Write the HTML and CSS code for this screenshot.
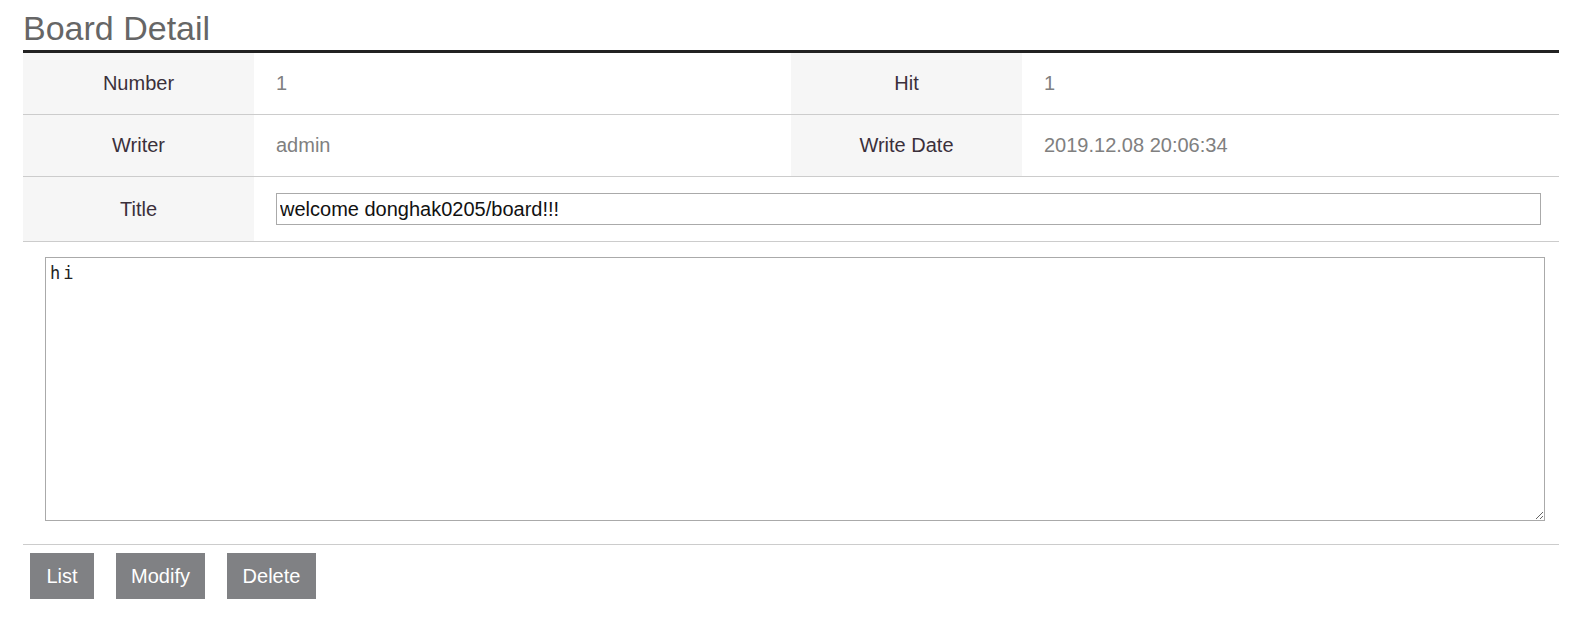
FILE: index.html
```html
<!DOCTYPE html>
<html>
<head>
<meta charset="utf-8">
<link rel="stylesheet" href="styles.css">
</head>
<body>
<div class="board">
  <h2 class="board-title">Board Detail</h2>
  <table class="detail">
    <colgroup>
      <col class="col-label">
      <col class="col-value">
      <col class="col-label">
      <col class="col-value">
    </colgroup>
    <tr>
      <th class="label">Number</th>
      <td class="value">1</td>
      <th class="label">Hit</th>
      <td class="value">1</td>
    </tr>
    <tr>
      <th class="label">Writer</th>
      <td class="value">admin</td>
      <th class="label">Write Date</th>
      <td class="value">2019.12.08 20:06:34</td>
    </tr>
    <tr class="title-row">
      <th class="label">Title</th>
      <td class="value input-cell" colspan="3"><input class="title-input" type="text" value="welcome donghak0205/board!!!"></td>
    </tr>
  </table>
  <div class="content-area">
    <textarea class="content">hi</textarea>
  </div>
  <div class="actions">
    <button class="btn btn-short">List</button>
    <button class="btn">Modify</button>
    <button class="btn">Delete</button>
  </div>
</div>
</body>
</html>
```
FILE: styles.css
```css
html, body {
  margin: 0;
  padding: 0;
  background: #fff;
}
body {
  font-family: "Liberation Sans", Arial, sans-serif;
}
.board {
  width: 1536px;
  margin-left: 23px;
}
.board-title {
  margin: 0;
  padding-top: 8px;
  height: 50px;
  box-sizing: border-box;
  font-size: 34px;
  font-weight: normal;
  line-height: 40px;
  color: #666;
}
.detail {
  width: 1536px;
  border-collapse: collapse;
  border-top: 3px solid #222;
  table-layout: fixed;
}
.col-label {
  width: 231px;
}
.col-value {
  width: 537px;
}
.detail tr {
  border-bottom: 1px solid #ccc;
}
.label {
  height: 61px;
  padding: 0;
  background: #f6f6f6;
  font-weight: normal;
  font-size: 20px;
  color: #3b303b;
  text-align: center;
}
.value {
  padding: 0 0 0 22px;
  font-size: 20px;
  font-weight: 300;
  color: #808080;
  text-align: left;
}
.title-row .label {
  height: 64px;
}
.input-cell {
  padding-right: 18px;
}
.title-input {
  display: block;
  width: 100%;
  height: 32px;
  box-sizing: border-box;
  border: 1px solid #aaa;
  padding: 0 3px;
  font-family: "Liberation Sans", Arial, sans-serif;
  font-size: 20px;
  color: #111;
  outline: none;
}
.content-area {
  padding: 15px 14px 23px 22px;
  border-bottom: 1px solid #ccc;
}
.content {
  display: block;
  width: 1500px;
  height: 264px;
  box-sizing: border-box;
  margin: 0;
  border: 1px solid #aaa;
  padding: 5px 4px;
  font-family: "DejaVu Sans Mono", monospace;
  font-size: 17px;
  font-weight: 300;
  color: #222;
  letter-spacing: 3px;
  resize: both;
  outline: none;
}
.actions {
  display: flex;
  gap: 22px;
  padding: 8px 7px;
}
.btn {
  width: 89px;
  height: 46px;
  padding: 0;
  border: none;
  background: #808184;
  color: #fff;
  font-family: "Liberation Sans", Arial, sans-serif;
  font-size: 20px;
  font-weight: 300;
  cursor: pointer;
}
.btn-short {
  width: 64px;
}
```
